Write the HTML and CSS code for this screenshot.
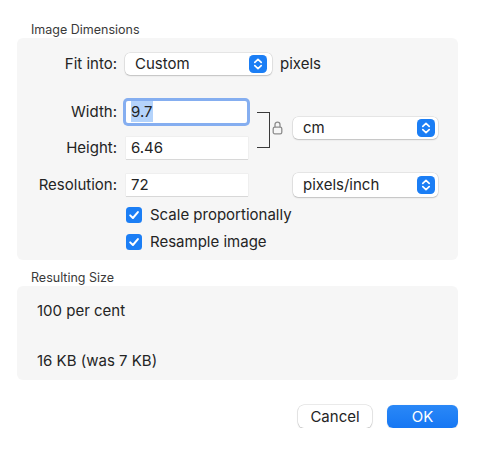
FILE: index.html
```html
<!DOCTYPE html>
<html lang="en">
<head>
<meta charset="utf-8">
<title>Image Dimensions</title>
<link rel="stylesheet" href="styles.css">
</head>
<body>
<div class="dialog">
  <div class="section-title">Image Dimensions</div>
  <div class="panel dims">
    <div class="row fit-row">
      <span class="lbl">Fit into:</span>
      <div class="popup popup-fit">
        <span class="popup-text">Custom</span>
        <svg class="stepper" width="18" height="18" viewBox="0 0 18 18"><rect width="18" height="18" rx="4.5" fill="#1b7ef5"/><path d="M5.8 7.4 L9 4.4 L12.2 7.4 M5.8 10.6 L9 13.6 L12.2 10.6" fill="none" stroke="#fff" stroke-width="1.7" stroke-linecap="round" stroke-linejoin="round"/></svg>
      </div>
      <span class="unit">pixels</span>
    </div>

    <div class="dims-grid">
      <span class="lbl g-wl">Width:</span>
      <div class="field focused g-wf"><span class="sel">9.7</span></div>
      <div class="link g-link">
        <span class="bracket"></span>
        <svg class="lock" width="11" height="15" viewBox="0 0 11 15"><path d="M3 7.2 V4.6 a2.5 2.5 0 0 1 5 0 V7.2" fill="none" stroke="#8d8d8d" stroke-width="1.3"/><rect x="1.2" y="7.2" width="8.6" height="6.6" rx="1.6" fill="none" stroke="#8d8d8d" stroke-width="1.3"/></svg>
      </div>
      <div class="popup popup-unit g-unit">
        <span class="popup-text">cm</span>
        <svg class="stepper" width="18" height="18" viewBox="0 0 18 18"><rect width="18" height="18" rx="4.5" fill="#1b7ef5"/><path d="M5.8 7.4 L9 4.4 L12.2 7.4 M5.8 10.6 L9 13.6 L12.2 10.6" fill="none" stroke="#fff" stroke-width="1.7" stroke-linecap="round" stroke-linejoin="round"/></svg>
      </div>
      <span class="lbl g-hl">Height:</span>
      <div class="field g-hf">6.46</div>
    </div>

    <div class="row res-row">
      <span class="lbl">Resolution:</span>
      <div class="field">72</div>
      <span class="spacer"></span>
      <div class="popup popup-res">
        <span class="popup-text">pixels/inch</span>
        <svg class="stepper" width="18" height="18" viewBox="0 0 18 18"><rect width="18" height="18" rx="4.5" fill="#1b7ef5"/><path d="M5.8 7.4 L9 4.4 L12.2 7.4 M5.8 10.6 L9 13.6 L12.2 10.6" fill="none" stroke="#fff" stroke-width="1.7" stroke-linecap="round" stroke-linejoin="round"/></svg>
      </div>
    </div>

    <div class="checks">
      <div class="check">
        <svg class="box" width="16" height="16" viewBox="0 0 16 16"><rect width="16" height="16" rx="3.5" fill="#1b7ef5"/><path d="M4.2 8.4 L6.9 11 L11.9 5.1" fill="none" stroke="#fff" stroke-width="2" stroke-linecap="round" stroke-linejoin="round"/></svg>
        <span>Scale proportionally</span>
      </div>
      <div class="check">
        <svg class="box" width="16" height="16" viewBox="0 0 16 16"><rect width="16" height="16" rx="3.5" fill="#1b7ef5"/><path d="M4.2 8.4 L6.9 11 L11.9 5.1" fill="none" stroke="#fff" stroke-width="2" stroke-linecap="round" stroke-linejoin="round"/></svg>
        <span>Resample image</span>
      </div>
    </div>
  </div>

  <div class="section-title second">Resulting Size</div>
  <div class="panel result">
    <div class="result-line">100 per cent</div>
    <div class="result-line second-line">16 KB (was 7 KB)</div>
  </div>

  <div class="buttons">
    <button class="btn cancel">Cancel</button>
    <button class="btn ok">OK</button>
  </div>
</div>
</body>
</html>
```

FILE: styles.css
```css
* { box-sizing: border-box; }

html, body {
  margin: 0;
  background: #ffffff;
}

body {
  font-family: Inter, "Liberation Sans", Arial, sans-serif;
  font-size: 15px;
  color: #242424;
}

.dialog {
  padding: 22px 22px 0 17px;
}

.section-title {
  font-size: 12.5px;
  line-height: 16px;
  color: #3a3a3a;
  margin-left: 14px;
}

.section-title.second {
  margin-top: 10px;
}

.panel {
  width: 441px;
  background: #f6f6f6;
  border-radius: 6px;
}

.dims {
  padding: 15px 0 9px;
}

.row {
  display: flex;
  align-items: center;
  height: 22px;
}

.lbl {
  width: 109px;
  padding-right: 9px;
  text-align: right;
  flex: none;
  line-height: 18px;
}

.popup {
  display: flex;
  align-items: center;
  justify-content: space-between;
  background: #ffffff;
  border-radius: 5px;
  box-shadow: 0 0 0 0.5px rgba(0, 0, 0, 0.13), 0 1px 1.5px rgba(0, 0, 0, 0.16);
  padding: 0 3px 0 10px;
  line-height: 18px;
}

.popup-fit {
  width: 147px;
  height: 22px;
  margin-left: -1px;
  padding-right: 5px;
}

.unit {
  margin-left: 8px;
  line-height: 18px;
}

.dims-grid {
  display: grid;
  grid-template-columns: 109px 122px 45px 145px;
  grid-template-rows: 22px 22px;
  row-gap: 14px;
  margin-top: 26px;
}

.g-wl { grid-column: 1; grid-row: 1; align-self: center; }
.g-wf { grid-column: 2; grid-row: 1; }
.g-hl { grid-column: 1; grid-row: 2; align-self: center; }
.g-hf { grid-column: 2; grid-row: 2; }
.g-link { grid-column: 3; grid-row: 1 / 3; }
.g-unit { grid-column: 4; grid-row: 1 / 3; align-self: center; height: 22px; margin-bottom: 5px; }

.field {
  width: 122px;
  height: 22px;
  background: #ffffff;
  padding-left: 5px;
  line-height: 22px;
  box-shadow: 0 0 0 0.5px rgba(0, 0, 0, 0.06), 0 1px 0 rgba(0, 0, 0, 0.09);
}

.field.focused {
  width: 121px;
  border-radius: 2px;
  box-shadow: 0 0 0 3px #85aef0;
}

.sel {
  background: #b4d3fb;
  padding: 1px 0;
}

.link {
  display: flex;
  align-items: center;
}

.bracket {
  display: block;
  width: 13px;
  height: 36px;
  margin-left: 9px;
  border: 1.6px solid #3a3a3a;
  border-left: none;
}

.lock {
  display: block;
  margin-left: 2px;
  margin-top: -6px;
}

.res-row {
  margin-top: 15px;
}

.spacer {
  width: 45px;
  flex: none;
}

.popup-res {
  width: 145px;
  height: 24px;
}

.checks {
  display: flex;
  flex-direction: column;
  gap: 9px;
  margin-top: 10px;
  padding-left: 109px;
}

.check {
  display: flex;
  align-items: center;
  height: 18px;
  line-height: 18px;
}

.box {
  display: block;
  flex: none;
  margin-right: 8px;
}

.result {
  padding: 16px 20px 10px;
}

.result-line {
  line-height: 18px;
}

.second-line {
  margin-top: 32px;
}

.buttons {
  width: 441px;
  display: flex;
  justify-content: flex-end;
  gap: 15px;
  margin-top: 25px;
}

.btn {
  font-family: inherit;
  font-size: 15px;
  height: 23px;
  border: none;
  border-radius: 6px;
  padding: 0;
  line-height: 23px;
}

.cancel {
  width: 74px;
  background: #ffffff;
  color: #242424;
  box-shadow: 0 0 0 0.5px rgba(0, 0, 0, 0.16), 0 1px 1.5px rgba(0, 0, 0, 0.18);
}

.ok {
  width: 71px;
  color: #ffffff;
  background: linear-gradient(#2a88f7, #1677f3);
  box-shadow: 0 0.5px 1px rgba(0, 0, 0, 0.15);
}
```
